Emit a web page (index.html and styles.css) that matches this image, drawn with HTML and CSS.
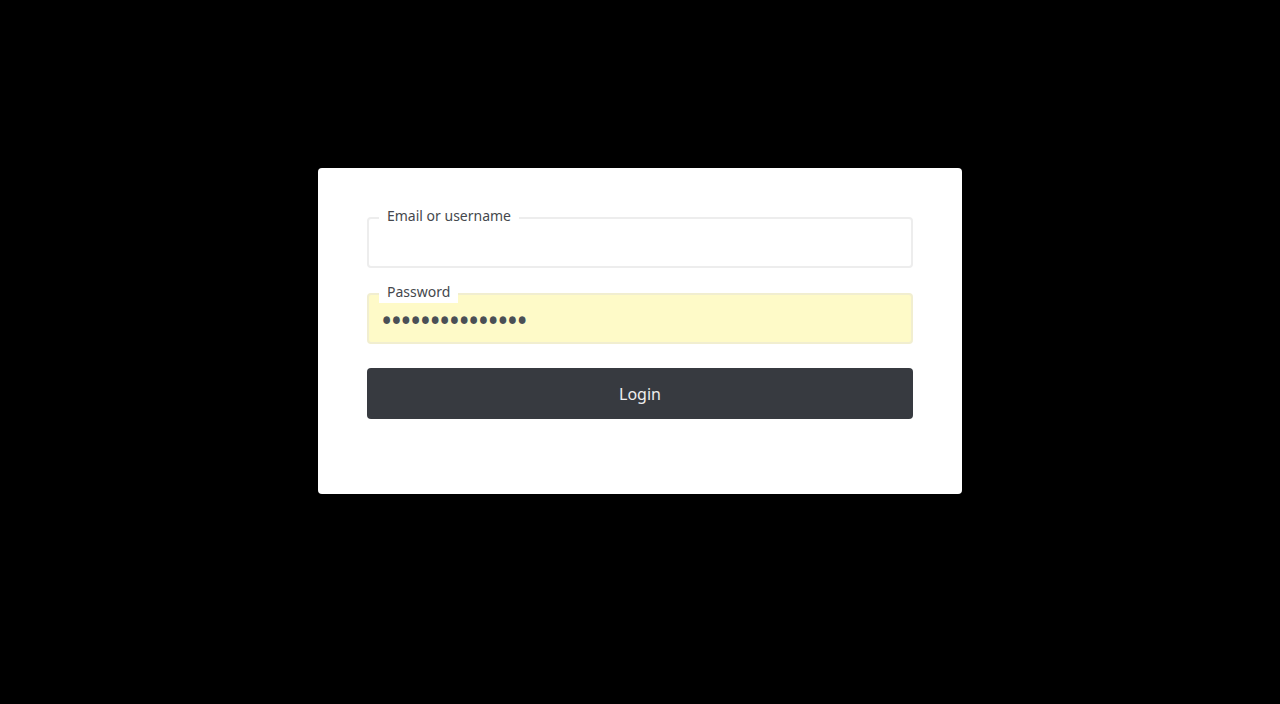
FILE: index.html
```html
<!DOCTYPE html>
<html lang="en">
<head>
<meta charset="utf-8">
<title>Login</title>
<link rel="stylesheet" href="styles.css">
</head>
<body>
<main class="stage">
  <form class="card">
    <label class="field field--first">
      <span class="field-label">Email or username</span>
      <input class="field-input" type="text">
    </label>
    <label class="field">
      <span class="field-label">Password</span>
      <input class="field-input field-input--filled" type="password" value="passwordpasswor">
    </label>
    <button class="btn" type="button">Login</button>
  </form>
</main>
</body>
</html>
```
FILE: styles.css
```css
* { box-sizing: border-box; }
html, body { margin: 0; height: 100%; background: #000; }
body { font-family: "Noto Sans", "Open Sans", sans-serif; }
.stage {
  display: flex;
  justify-content: center;
  padding-top: 168px;
}
.card {
  width: 644px;
  height: 326px;
  background: #fff;
  border-radius: 4px;
  padding: 49px 49px 0;
  display: flex;
  flex-direction: column;
  gap: 24px;
}
.field {
  position: relative;
  display: block;
}
.field--first { margin-bottom: 1px; }
.field-label {
  position: absolute;
  left: 12px;
  top: -12px;
  padding: 0 8px;
  background: #fff;
  font-size: 14px;
  line-height: 22px;
  color: #45484d;
}
.field-input {
  display: block;
  width: 100%;
  height: 51px;
  border: 2px solid #ededed;
  border-radius: 4px;
  background: #fff;
  padding: 4px 13px 0;
  font-family: "Noto Sans", sans-serif;
  font-size: 16px;
  color: #4a4f55;
  outline: none;
}
.field-input--filled {
  background: #fefac8;
  border-color: #f1eed0;
  font-size: 30px;
  letter-spacing: -1.6px;
  padding: 3px 12px 0;
}
.btn {
  height: 51px;
  border: 0;
  border-radius: 4px;
  background: #373a40;
  color: #eeeeee;
  font-family: "Noto Sans", sans-serif;
  font-size: 16px;
}
```
